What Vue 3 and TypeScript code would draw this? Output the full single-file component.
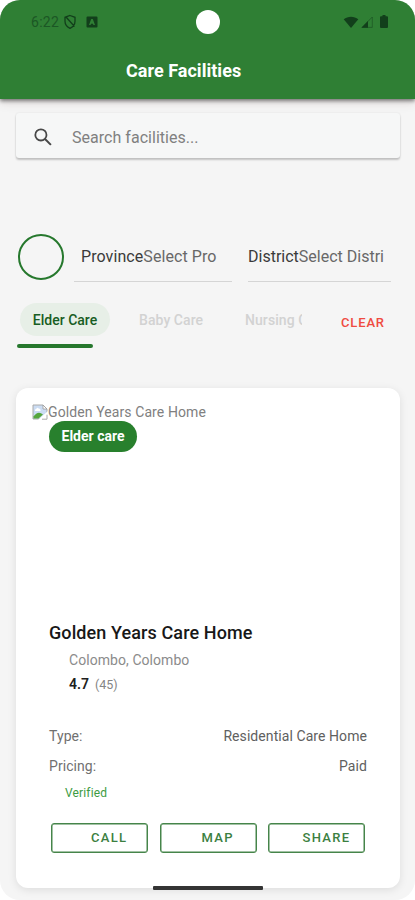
<script setup lang="ts">
interface Detail {
  label: string
  value: string
}

const details: Detail[] = [
  { label: 'Type:', value: 'Residential Care Home' },
  { label: 'Pricing:', value: 'Paid' },
]
const actions: string[] = ['Call', 'Map', 'Share']
</script>

<template>
  <div class="screen">
    <header class="header">
      <div class="status">
        <span class="time">6:22</span>
        <svg class="shield" viewBox="0 0 14 16" width="14" height="16">
          <path d="M7 1.500 12 3.300v3.900c0 3.200-2 5.600-5 7.100-3-1.500-5-3.900-5-7.100V3.300z M3 3l8.500 9.500" fill="none" stroke="currentColor" stroke-width="1.300" />
        </svg>
        <svg class="app-icon" viewBox="0 0 12 12" width="12" height="12">
          <path fill="currentColor" fill-rule="evenodd" d="M1.500.5h9a1 1 0 0 1 1 1v9a1 1 0 0 1-1 1h-9a1 1 0 0 1-1-1v-9a1 1 0 0 1 1-1zM5.200 3 3 9h1.600l.4-1.200h2L7.400 9H9L6.800 3z" />
        </svg>
        <span class="camera"></span>
        <svg class="wifi" viewBox="0 0 16 12" width="16" height="12">
          <path fill="currentColor" d="M.7 3.300C4.800-.1 11.200-.1 15.300 3.300L8 12z" />
        </svg>
        <svg class="signal" viewBox="0 0 12 12" width="12" height="12">
          <path d="M11.300 1v10.400H1z" fill="none" stroke="currentColor" stroke-width=".8" opacity=".6" />
          <path d="M7 5v6.800H.4z" fill="currentColor" />
        </svg>
        <svg class="battery" viewBox="0 0 8 13" width="8" height="13">
          <path d="M2.500 0h3v1.300H7q1 0 1 1V12q0 1-1 1H1q-1 0-1-1V2.300q0-1 1-1h1.500z" fill="currentColor" />
        </svg>
      </div>
      <h1>Care Facilities</h1>
    </header>

    <main>
      <div class="search">
        <svg viewBox="0 0 18 18" width="18" height="18">
          <circle cx="6.900" cy="6.900" r="5.600" fill="none" stroke="currentColor" stroke-width="1.800" />
          <path d="m11 11 5.900 5.900" stroke="currentColor" stroke-width="2" />
        </svg>
        <span>Search facilities...</span>
      </div>

      <div class="filters">
        <span class="ring"></span>
        <div class="select province"><b>Province</b><span>Select Pro</span></div>
        <div class="select district"><b>District</b><span>Select District</span></div>
      </div>

      <div class="tabs">
        <span class="chip">Elder Care</span>
        <span class="tab baby">Baby Care</span>
        <span class="tab nursing">Nursing Care</span>
        <span class="clear">CLEAR</span>
      </div>
      <div class="indicator"></div>

      <article class="card">
        <div class="photo">
          <svg viewBox="0 0 16 16" width="16" height="16">
            <path d="M1 1h10l4 4v10H1z" fill="#cbdcf3" stroke="#aaa" />
            <path d="M11 1v4h4z" fill="#fff" stroke="#999" stroke-width=".8" />
            <path d="M3 7q-.5-2 1.300-2 .8-2 2.300-.5Q9 4.500 8.500 7z" fill="#fff" />
            <path d="M1.500 14.500v-2Q6 6 11 10.500l-4.500 4z" fill="#55a63d" />
            <path d="m6 16 10-9v9z" fill="#fff" />
            <path d="M10 15.200h5v-4.500" fill="none" stroke="#aaa" />
          </svg>
          <span>Golden Years Care Home</span>
        </div>
        <div class="body">
          <span class="badge">Elder care</span>
          <h2>Golden Years Care Home</h2>
          <p class="location">Colombo, Colombo</p>
          <p class="rating"><b>4.7</b><span>(45)</span></p>
          <dl>
            <div v-for="item in details" :key="item.label" class="detail">
              <dt>{{ item.label }}</dt>
              <dd>{{ item.value }}</dd>
            </div>
          </dl>
          <p class="verified">Verified</p>
          <div class="actions">
            <button v-for="action in actions" :key="action" type="button" :class="action.toLowerCase()">{{ action }}</button>
          </div>
        </div>
      </article>
    </main>
    <div class="home-bar"></div>
  </div>
</template>

<style>
body { background: #fff; }
</style>

<style scoped>
* { box-sizing: border-box; margin: 0; padding: 0; }
.screen {
  position: relative;
  width: 415px;
  height: 900px;
  overflow: hidden;
  border-radius: 20px;
  background: #f5f5f5;
  font-family: Roboto, sans-serif;
  white-space: nowrap;
}
.header {
  height: 99px;
  background: #2f7f34;
  color: #fff;
  box-shadow: 0 2px 4px rgba(0, 0, 0, .5), 0 5px 10px rgba(80, 20, 20, .08);
}
.status {
  display: flex;
  align-items: center;
  height: 43px;
  padding: 0 27px 0 31px;
  color: #123f1b;
}
.time { width: 32px; font-size: 14px; letter-spacing: .3px; color: #1c5725; }
.app-icon { margin-left: 9px; }
.camera { width: 24px; height: 24px; margin-left: 98px; border-radius: 50%; background: #fff; }
.wifi { margin-left: auto; }
.signal { margin-left: 2px; }
.battery { margin-left: 7px; }
h1 { padding-left: 126px; font-size: 18px; line-height: 56px; font-weight: 700; letter-spacing: .03px; }
main { padding: 14px 15px 0 16px; }
.search {
  display: flex;
  align-items: center;
  height: 45px;
  padding: 3px 18px 0;
  border-radius: 3px;
  background: #f6f7f7;
  box-shadow: 0 2px 2px rgba(0, 0, 0, .2), 0 0 2px rgba(0, 0, 0, .1);
  color: #484848;
}
.search span { margin-left: 20px; color: #808080; font-size: 16px; letter-spacing: .03px; }
.filters { display: flex; height: 47px; margin-top: 76px; padding-left: 2px; }
.ring { width: 46px; height: 46px; border: 2px solid #26782d; border-radius: 50%; }
.select { height: 48px; overflow: hidden; border-bottom: 1px solid #d5d5d5; font-size: 16px; line-height: 45px; color: #686868; }
.select b { font-weight: 400; color: #3a3a3a; }
.province { width: 158px; margin-left: 10px; padding-left: 7px; letter-spacing: .08px; }
.district { width: 143px; margin-left: 16px; padding-right: 7px; }
.district { display: flex; }
.district span { overflow: hidden; }
.tabs { display: flex; height: 33px; margin-top: 22px; padding-left: 4px; line-height: 34px; font-size: 14px; }
.chip { width: 90px; border-radius: 17px; background: #e7efe7; color: #175d23; font-weight: 500; text-align: center; letter-spacing: 0; }
.tab { color: #d2d2d2; letter-spacing: .07px; font-weight: 500; overflow: hidden; }
.baby { width: 72px; margin-left: 29px; }
.nursing { width: 57px; margin-left: 34px; }
.clear { margin-left: 39px; padding-top: 3px; color: #ef4b41; font-weight: 500; font-size: 13px; letter-spacing: .85px; }
.indicator { width: 76px; height: 4px; margin: 8px 0 0 1px; border-radius: 2px; background: #26772d; }
.card {
  height: 500px;
  width: 384px;
  margin-top: 40px;
  padding: 16px;
  border-radius: 12px;
  background: #fff;
  box-shadow: 0 2px 8px rgba(0, 0, 0, .1);
}
.photo { display: flex; height: 17px; color: #808080; font-size: 14px; line-height: 17px; letter-spacing: .1px; }
.body { padding: 0 17px; }
.badge { display: block; width: 88px; height: 31px; border-radius: 16px; background: #28802d; color: #fff; font-size: 14px; line-height: 31px; font-weight: 700; text-align: center; letter-spacing: -.01px; }
h2 { margin-top: 169px; color: #181818; font-size: 18px; line-height: 24px; font-weight: 500; letter-spacing: .1px; }
.location { padding: 4px 0 0 20px; color: #8b8b8b; font-size: 14px; line-height: 22px; letter-spacing: .06px; }
.rating { display: flex; gap: 6px; padding: 2px 0 0 20px; color: #858585; font-size: 12.500px; line-height: 23px; }
.rating b { color: #202020; font-size: 14px; font-weight: 600; }
dl { margin-top: 26px; font-size: 14px; line-height: 29px; }
.detail { display: flex; justify-content: space-between; letter-spacing: .07px; }
.detail + .detail { padding-top: 1px; }
dt { color: #707070; }
dd { color: #606060; }
.verified { padding-left: 16px; color: #3d9b42; font-size: 12px; line-height: 25px; letter-spacing: .15px; }
.actions { display: grid; grid-template-columns: repeat(3, 97px); gap: 11.500px; margin: 17px 0 0 2px; }
button { height: 30px; border: 1.500px solid #46854a; border-radius: 3px; background: #fff; padding: 0 0 0 39px; color: #3c7f41; font: 500 13px/28px Roboto, sans-serif; letter-spacing: 1.300px; text-transform: uppercase; text-align: left; box-shadow: inset 0 0 0 .5px #46854a; }
button.map { padding-left: 41px; }
button.share { padding-left: 33.500px; }
.home-bar { position: absolute; left: 153px; bottom: 10px; width: 110px; height: 4px; border-radius: 1px; background: #343434; }
</style>
